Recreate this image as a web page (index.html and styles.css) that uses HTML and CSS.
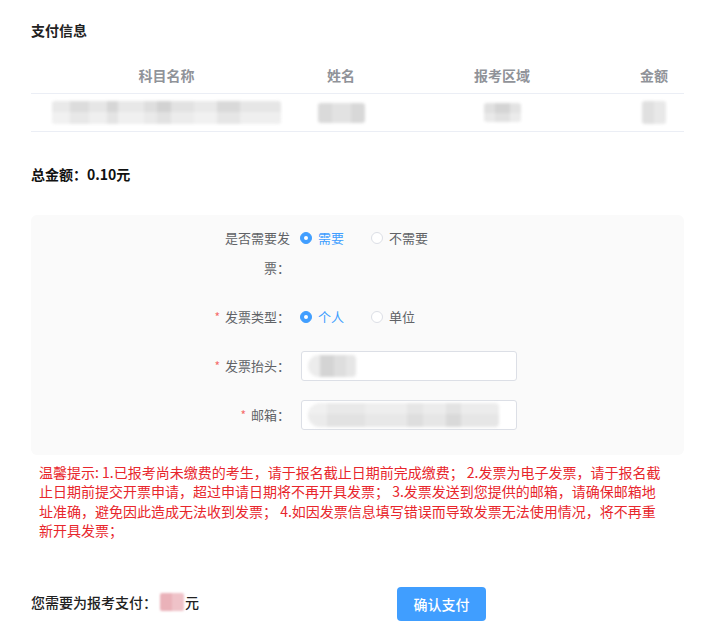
FILE: index.html
```html
<!DOCTYPE html>
<html lang="zh-CN">
<head>
<meta charset="utf-8">
<title>支付信息</title>
<link rel="stylesheet" href="styles.css">
</head>
<body>
<div class="page">
  <h2 class="title">支付信息</h2>

  <table class="pay-table">
    <colgroup>
      <col class="col-subject">
      <col class="col-name">
      <col class="col-area">
      <col class="col-amount">
    </colgroup>
    <thead>
      <tr><th>科目名称</th><th>姓名</th><th>报考区域</th><th>金额</th></tr>
    </thead>
    <tbody>
      <tr>
        <td><span class="blur blur-subject"></span></td>
        <td><span class="blur blur-name"></span></td>
        <td><span class="blur blur-area"></span></td>
        <td><span class="blur blur-amount"></span></td>
      </tr>
    </tbody>
  </table>

  <div class="total">总金额：0.10元</div>

  <div class="invoice-box">
    <div class="form-item form-item-tall">
      <div class="label label-wrap">是否需要发票：</div>
      <div class="control">
        <span class="radio checked"><span class="dot"></span>需要</span>
        <span class="radio"><span class="dot"></span>不需要</span>
      </div>
    </div>
    <div class="form-item">
      <div class="label label-req"><span class="star">*</span><span>发票类型：</span></div>
      <div class="control">
        <span class="radio checked"><span class="dot"></span>个人</span>
        <span class="radio"><span class="dot"></span>单位</span>
      </div>
    </div>
    <div class="form-item">
      <div class="label label-req"><span class="star">*</span><span>发票抬头：</span></div>
      <div class="control">
        <div class="input"><span class="blur blur-title"></span></div>
      </div>
    </div>
    <div class="form-item">
      <div class="label label-req"><span class="star">*</span><span>邮箱：</span></div>
      <div class="control">
        <div class="input"><span class="blur blur-email"></span></div>
      </div>
    </div>
  </div>

  <p class="tips">温馨提示: 1.已报考尚未缴费的考生，请于报名截止日期前完成缴费； 2.发票为电子发票，请于报名截止日期前提交开票申请，超过申请日期将不再开具发票； 3.发票发送到您提供的邮箱，请确保邮箱地址准确，避免因此造成无法收到发票； 4.如因发票信息填写错误而导致发票无法使用情况，将不再重新开具发票；</p>

  <div class="footer">
    <div class="pay-text">您需要为报考支付：<span class="blur blur-pay"></span>元</div>
    <button class="btn-primary" type="button">确认支付</button>
  </div>
</div>
</body>
</html>
```

FILE: styles.css
```css
* {
  box-sizing: border-box;
}

html, body {
  margin: 0;
  padding: 0;
  background: #fff;
}

body {
  font-family: "Noto Sans CJK SC", "Noto Sans", "Liberation Sans", sans-serif;
  color: #333;
  font-size: 14px;
}

.page {
  padding: 20px 22px 0 31px;
}

.title {
  margin: 0;
  font-size: 14px;
  line-height: 20px;
  font-weight: 700;
  color: #222;
}

.pay-table {
  margin-top: 19px;
  width: 653px;
  border-collapse: collapse;
  table-layout: fixed;
}

.col-subject { width: 271px; }
.col-name { width: 78px; }
.col-area { width: 244px; }
.col-amount { width: 60px; }

.pay-table th {
  height: 34px;
  padding: 0 0 1px;
  font-size: 14px;
  font-weight: 700;
  color: #909399;
  text-align: center;
  border-bottom: 1px solid #ebeef5;
}

.pay-table td {
  height: 38px;
  padding: 0;
  text-align: center;
  border-bottom: 1px solid #ebeef5;
}

.blur {
  display: inline-block;
  vertical-align: middle;
  filter: blur(1.6px);
  border-radius: 3px;
}

.blur-subject {
  width: 229px;
  height: 23px;
  background:
    linear-gradient(180deg, rgba(255,255,255,0) 0 50%, rgba(255,255,255,0.35) 50% 100%),
    linear-gradient(90deg,
      #e9e9e9 0 8%, #dcdcdc 8% 16%, #e6e6e6 16% 24%, #d6d6d6 24% 29%,
      #e8e8e8 29% 40%, #dedede 40% 46%, #d2d2d2 46% 52%, #e2e2e2 52% 62%,
      #e9e9e9 62% 72%, #d9d9d9 72% 82%, #e6e6e6 82% 100%);
}

.blur-name {
  width: 47px;
  height: 20px;
  background: linear-gradient(90deg, #dadada 0 30%, #e2e2e2 30% 70%, #d8d8d8 70% 100%);
}

.blur-area {
  width: 37px;
  height: 19px;
  margin-top: -4px;
  background:
    linear-gradient(180deg, rgba(255,255,255,0) 0 55%, rgba(255,255,255,0.3) 55% 100%),
    linear-gradient(90deg, #e0e0e0 0 30%, #d4d4d4 30% 70%, #e3e3e3 70% 100%);
}

.blur-amount {
  width: 24px;
  height: 23px;
  background: linear-gradient(90deg, #e0e0e0 0 50%, #e8e8e8 50% 100%);
}

.total {
  margin-top: 32px;
  font-size: 14px;
  line-height: 20px;
  font-weight: 700;
  color: #111;
}

.invoice-box {
  margin-top: 31px;
  width: 653px;
  background: #fafafa;
  border-radius: 6px;
  padding: 8px 0 25px 189px;
}

.form-item {
  display: flex;
  align-items: flex-start;
  margin-bottom: 19px;
}

.form-item:last-child {
  margin-bottom: 0;
}

.label {
  width: 80px;
  flex: none;
  padding-right: 10px;
  font-size: 13px;
  line-height: 30px;
  color: #606266;
  text-align: right;
}

.label-req {
  display: flex;
  justify-content: flex-end;
  white-space: nowrap;
}

.star {
  color: #f56c6c;
  margin-right: 5px;
  font-size: 12px;
}

.control {
  display: flex;
  align-items: center;
  height: 30px;
  font-size: 13px;
}

.radio {
  display: inline-flex;
  align-items: center;
  color: #606266;
  margin-right: 27px;
  line-height: 30px;
}

.radio .dot {
  width: 12px;
  height: 12px;
  border: 1px solid #dcdfe6;
  border-radius: 50%;
  background: #fff;
  margin-right: 6px;
  position: relative;
}

.radio.checked {
  color: #409eff;
}

.radio.checked .dot {
  border-color: #409eff;
  background: #409eff;
}

.radio.checked .dot::after {
  content: "";
  position: absolute;
  left: 50%;
  top: 50%;
  width: 4px;
  height: 4px;
  margin: -2px 0 0 -2px;
  border-radius: 50%;
  background: #fff;
}

.input {
  width: 216px;
  height: 30px;
  margin-left: 1px;
  border: 1px solid #dcdfe6;
  border-radius: 3px;
  background: #fff;
  display: flex;
  align-items: center;
  padding-left: 6px;
}

.blur-title {
  width: 48px;
  height: 22px;
  border-radius: 11px 4px 4px 11px;
  background: linear-gradient(90deg, #ececec 0 25%, #d4d4d4 25% 55%, #dedede 55% 80%, #e6e6e6 80% 100%);
}

.blur-email {
  width: 191px;
  height: 24px;
  border-radius: 12px 4px 4px 12px;
  background:
    linear-gradient(180deg, rgba(255,255,255,0.25) 0 45%, rgba(0,0,0,0) 45% 100%),
    linear-gradient(90deg, #ebebeb 0 10%, #e2e2e2 10% 30%, #e8e8e8 30% 52%,
      #dedede 52% 60%, #e6e6e6 60% 72%, #d9d9d9 72% 80%, #e6e6e6 80% 100%);
}

.tips {
  margin: 8px 0 0;
  padding-left: 8px;
  width: 636px;
  font-size: 14px;
  line-height: 19.5px;
  color: #e8262c;
}

.footer {
  margin-top: 46px;
  display: flex;
  align-items: center;
}

.pay-text {
  width: 366px;
  flex: none;
  font-size: 14px;
  color: #222;
  font-weight: 500;
  display: flex;
  align-items: center;
  margin-top: -3px;
}

.blur-pay {
  width: 24px;
  height: 18px;
  margin: 0 1px 0 3px;
  background: linear-gradient(90deg, #eab2b9 0 50%, #efc2c8 50% 100%);
  filter: blur(1.2px);
  border-radius: 2px;
}

.btn-primary {
  width: 89px;
  height: 34px;
  border: none;
  border-radius: 4px;
  background: #409eff;
  color: #fff;
  font-family: inherit;
  font-size: 14px;
  font-weight: 500;
  padding: 0;
  cursor: pointer;
}
```
